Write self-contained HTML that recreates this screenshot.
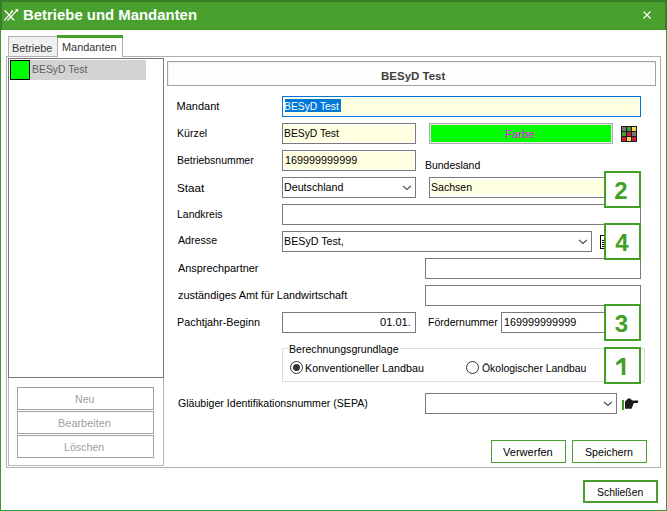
<!DOCTYPE html>
<html><head><meta charset="utf-8"><style>
html,body{margin:0;padding:0;}
body{width:667px;height:511px;position:relative;overflow:hidden;background:#fff;font-family:'Liberation Sans', sans-serif;}
.b{position:absolute;box-sizing:border-box;}
.t{position:absolute;white-space:pre;transform-origin:0 0;}
</style></head><body>
<div class="b" style="left:0px;top:0px;width:667px;height:30px;background:#49a02e;"></div>
<div class="b" style="left:0px;top:0px;width:667px;height:2px;background:#3a7d2a;"></div>
<div class="b" style="left:0px;top:0px;width:2px;height:30px;background:#3a7d2a;"></div>
<div class="b" style="left:665px;top:0px;width:2px;height:30px;background:#3a7d2a;"></div>
<div class="b" style="left:2px;top:29px;width:663px;height:1px;background:#3f9a27;"></div>
<div class="b" style="left:0px;top:30px;width:1px;height:481px;background:#3c9a26;"></div>
<div class="b" style="left:666px;top:30px;width:1px;height:481px;background:#3c9a26;"></div>
<div class="b" style="left:0px;top:510px;width:667px;height:1px;background:#3c9a26;"></div>
<svg class="b" style="left:0;top:0" width="30" height="30" viewBox="0 0 30 30"><g stroke="#fff" stroke-width="1.25" fill="none" stroke-linecap="round"><path d="M5 10.8 L13.9 20"/><path d="M4.6 20.2 L11.6 12"/><path d="M7.8 20.2 L16.4 10.8"/></g><path d="M14.8 9.2 L18.2 8.9 L17.9 12.3 Z" fill="#fff"/><circle cx="12.1" cy="11.4" r="1.1" fill="#fff"/></svg>
<svg class="b" style="left:638px;top:6px" width="18" height="18" viewBox="0 0 18 18"><path d="M5.5 5.5 L12.5 12.5 M12.5 5.5 L5.5 12.5" stroke="#fff" stroke-width="1.1"/></svg>
<div class="b" style="left:6px;top:56px;width:655px;height:412px;border:1px solid #b0b0b0;"></div>
<div class="b" style="left:8px;top:36px;width:50px;height:21px;background:#f0f0f0;border:1px solid #b0b0b0;"></div>
<div class="b" style="left:57px;top:35px;width:66px;height:22px;background:#fff;border:1px solid #b0b0b0;border-bottom:none;"></div>
<div class="b" style="left:57px;top:35px;width:66px;height:3px;background:#45a02a;"></div>
<div class="b" style="left:8px;top:58px;width:156px;height:408px;border:1px solid #b8b8b8;"></div>
<div class="b" style="left:8px;top:58px;width:156px;height:320px;border:1px solid #787878;background:#fff;"></div>
<div class="b" style="left:30px;top:60px;width:116px;height:20px;background:#d3d3d3;"></div>
<div class="b" style="left:10px;top:60px;width:20px;height:20px;background:#00ff00;border:1px solid #000;"></div>
<div class="b" style="left:17px;top:387px;width:137px;height:23px;border:1px solid #a0a0a0;background:#fff;"></div>
<div class="b" style="left:17px;top:411px;width:137px;height:23px;border:1px solid #a0a0a0;background:#fff;"></div>
<div class="b" style="left:17px;top:435px;width:137px;height:23px;border:1px solid #a0a0a0;background:#fff;"></div>
<div class="b" style="left:167px;top:61px;width:489px;height:25px;border:1px solid #a0a0a0;background:#fdfdfd;box-shadow:inset 1px 1px 0 #f0f0f0;"></div>
<div class="b" style="left:282px;top:96px;width:359px;height:21px;border:1px solid #0078d7;background:#fff;"></div>
<div class="b" style="left:284px;top:98px;width:355px;height:17px;background:#ffffe1;"></div>
<div class="b" style="left:285px;top:99px;width:56px;height:13px;background:#0078d7;"></div>
<div class="b" style="left:282px;top:123px;width:134px;height:21px;border:1px solid #7a7a7a;background:#fff;"></div>
<div class="b" style="left:284px;top:125px;width:130px;height:17px;background:#ffffe1;"></div>
<div class="b" style="left:429px;top:123px;width:184px;height:21px;border:1px solid #adadad;background:#e6e6e6;"></div>
<div class="b" style="left:431px;top:125px;width:180px;height:17px;background:#00ff00;"></div>
<div class="b" style="left:621px;top:126px;width:16px;height:16px;background:#1a1a1a;"><div class="b" style="left:1px;top:1px;width:4px;height:4px;background:#777777;"></div><div class="b" style="left:6px;top:1px;width:4px;height:4px;background:#4a9e2f;"></div><div class="b" style="left:11px;top:1px;width:4px;height:4px;background:#ffd740;"></div><div class="b" style="left:1px;top:6px;width:4px;height:4px;background:#4a9e2f;"></div><div class="b" style="left:6px;top:6px;width:4px;height:4px;background:#c8203a;"></div><div class="b" style="left:11px;top:6px;width:4px;height:4px;background:#777777;"></div><div class="b" style="left:1px;top:11px;width:4px;height:4px;background:#c8203a;"></div><div class="b" style="left:6px;top:11px;width:4px;height:4px;background:#ffd740;"></div><div class="b" style="left:11px;top:11px;width:4px;height:4px;background:#c8203a;"></div></div>
<div class="b" style="left:282px;top:150px;width:134px;height:21px;border:1px solid #7a7a7a;background:#fff;"></div>
<div class="b" style="left:284px;top:152px;width:130px;height:17px;background:#ffffe1;"></div>
<div class="b" style="left:282px;top:177px;width:134px;height:21px;border:1px solid #7a7a7a;background:#fff;"></div>
<svg class="b" style="left:402px;top:185px" width="10" height="6" viewBox="0 0 10 6"><path d="M0.9 0.8 L5 4.5 L8.9 0.8" stroke="#444" stroke-width="1.1" fill="none"/></svg>
<div class="b" style="left:429px;top:177px;width:212px;height:21px;border:1px solid #7a7a7a;background:#fff;"></div>
<div class="b" style="left:432px;top:180px;width:206px;height:15px;background:#ffffe1;"></div>
<div class="b" style="left:282px;top:204px;width:359px;height:21px;border:1px solid #7a7a7a;background:#fff;"></div>
<div class="b" style="left:282px;top:231px;width:310px;height:21px;border:1px solid #7a7a7a;background:#fff;"></div>
<svg class="b" style="left:578px;top:239px" width="10" height="6" viewBox="0 0 10 6"><path d="M0.9 0.8 L5 4.5 L8.9 0.8" stroke="#444" stroke-width="1.1" fill="none"/></svg>
<div class="b" style="left:600px;top:235px;width:10px;height:14px;border:1px solid #000;background:#fff;box-sizing:border-box"></div>
<div class="b" style="left:602px;top:240px;width:6px;height:1px;background:#000;"></div>
<div class="b" style="left:602px;top:242px;width:6px;height:1px;background:#000;"></div>
<div class="b" style="left:602px;top:244px;width:6px;height:1px;background:#000;"></div>
<div class="b" style="left:602px;top:246px;width:6px;height:1px;background:#000;"></div>
<div class="b" style="left:425px;top:258px;width:216px;height:21px;border:1px solid #7a7a7a;background:#fff;"></div>
<div class="b" style="left:425px;top:285px;width:216px;height:21px;border:1px solid #7a7a7a;background:#fff;"></div>
<div class="b" style="left:282px;top:312px;width:134px;height:21px;border:1px solid #7a7a7a;background:#fff;"></div>
<div class="b" style="left:501px;top:312px;width:140px;height:21px;border:1px solid #7a7a7a;background:#fff;"></div>
<div class="b" style="left:282px;top:348px;width:363px;height:34px;border:1px solid #dcdcdc;"></div>
<div class="b" style="left:288px;top:342px;width:112px;height:11px;background:#fff;"></div>
<svg class="b" style="left:288px;top:359px" width="18" height="18" viewBox="0 0 18 18"><circle cx="8.5" cy="8.5" r="6" fill="#fff" stroke="#333" stroke-width="1"/><circle cx="8.5" cy="8.5" r="3.5" fill="#333"/></svg>
<svg class="b" style="left:464px;top:359px" width="18" height="18" viewBox="0 0 18 18"><circle cx="8.5" cy="8.5" r="6" fill="#fff" stroke="#333" stroke-width="1"/></svg>
<div class="b" style="left:425px;top:393px;width:192px;height:21px;border:1px solid #7a7a7a;background:#fff;"></div>
<svg class="b" style="left:603px;top:401px" width="10" height="6" viewBox="0 0 10 6"><path d="M0.9 0.8 L5 4.5 L8.9 0.8" stroke="#444" stroke-width="1.1" fill="none"/></svg>
<div class="b" style="left:622px;top:400px;width:2px;height:10px;background:#3c9a23;"></div>
<svg class="b" style="left:624px;top:397px" width="16" height="14" viewBox="0 0 16 14"><path d="M1 4.5 L4 1.5 L6.2 1.5 L8.3 3.6 L13.3 3.6 Q14.3 3.6 14.3 4.75 Q14.3 5.9 13.3 5.9 L9.8 5.9 L7.6 11.8 L1 11.8 Z" fill="#1a1a1a"/></svg>
<div class="b" style="left:491px;top:440px;width:75px;height:23px;border:1px solid #4a9e2f;background:#fff;"></div>
<div class="b" style="left:572px;top:440px;width:75px;height:23px;border:1px solid #4a9e2f;background:#fff;"></div>
<div class="b" style="left:583px;top:480px;width:75px;height:23px;border:2px solid #4a9e2f;background:#fff;"></div>
<div class="b" style="left:604px;top:171px;width:37px;height:37px;border:2px solid #42a027;background:#fff;"></div>
<div class="b" style="left:604px;top:223px;width:37px;height:37px;border:2px solid #42a027;background:#fff;"></div>
<div class="b" style="left:604px;top:304px;width:37px;height:37px;border:2px solid #42a027;background:#fff;"></div>
<div class="b" style="left:604px;top:347px;width:37px;height:37px;border:2px solid #42a027;background:#fff;"></div>
<svg class="b" style="left:0;top:0" width="667" height="511"><polygon points="621.6,358 625.3,358 625.3,375 621.8,375 621.8,362.6 616.3,365.6 616.3,362.2" fill="#42a027"/></svg>
<span class="t" style="left:23.01px;top:7px;font-size:15px;line-height:15px;font-weight:700;color:#fff;transform:scaleX(0.9942);">Betriebe und Mandanten</span>
<span class="t" style="left:11.92px;top:43px;font-size:11px;line-height:11px;font-weight:400;color:#333;transform:scaleX(0.9800);">Betriebe</span>
<span class="t" style="left:61.81px;top:42px;font-size:11px;line-height:11px;font-weight:400;color:#333;transform:scaleX(0.9907);">Mandanten</span>
<span class="t" style="left:31.75px;top:64px;font-size:11px;line-height:11px;font-weight:400;color:#606060;transform:scaleX(0.9466);">BESyD Test</span>
<span class="t" style="left:380.95px;top:71px;font-size:11px;line-height:11px;font-weight:700;color:#404040;transform:scaleX(1.0450);">BESyD Test</span>
<span class="t" style="left:176.60px;top:101px;font-size:11px;line-height:11px;font-weight:400;color:#000;transform:scaleX(1.0000);">Mandant</span>
<span class="t" style="left:176.63px;top:128px;font-size:11px;line-height:11px;font-weight:400;color:#000;transform:scaleX(0.9700);">Kürzel</span>
<span class="t" style="left:176.65px;top:155px;font-size:11px;line-height:11px;font-weight:400;color:#000;transform:scaleX(0.9500);">Betriebsnummer</span>
<span class="t" style="left:176.64px;top:183px;font-size:11px;line-height:11px;font-weight:400;color:#000;transform:scaleX(1.0600);">Staat</span>
<span class="t" style="left:176.75px;top:209px;font-size:11px;line-height:11px;font-weight:400;color:#000;transform:scaleX(0.9532);">Landkreis</span>
<span class="t" style="left:177.60px;top:235px;font-size:11px;line-height:11px;font-weight:400;color:#000;transform:scaleX(0.9700);">Adresse</span>
<span class="t" style="left:177.60px;top:263px;font-size:11px;line-height:11px;font-weight:400;color:#000;transform:scaleX(0.9889);">Ansprechpartner</span>
<span class="t" style="left:177.60px;top:290px;font-size:11px;line-height:11px;font-weight:400;color:#000;transform:scaleX(0.9918);">zuständiges Amt für Landwirtschaft</span>
<span class="t" style="left:176.62px;top:317px;font-size:11px;line-height:11px;font-weight:400;color:#000;transform:scaleX(0.9831);">Pachtjahr-Beginn</span>
<span class="t" style="left:177.60px;top:398px;font-size:11px;line-height:11px;font-weight:400;color:#000;transform:scaleX(0.9619);">Gläubiger Identifikationsnummer (SEPA)</span>
<span class="t" style="left:284.06px;top:101px;font-size:11px;line-height:11px;font-weight:400;color:#fff;transform:scaleX(0.9379);">BESyD Test</span>
<span class="t" style="left:284.06px;top:128px;font-size:11px;line-height:11px;font-weight:400;color:#000;transform:scaleX(0.9379);">BESyD Test</span>
<span class="t" style="left:284.82px;top:155px;font-size:11px;line-height:11px;font-weight:400;color:#000;transform:scaleX(0.9833);">169999999999</span>
<span class="t" style="left:283.73px;top:182px;font-size:11px;line-height:11px;font-weight:400;color:#000;transform:scaleX(0.9717);">Deutschland</span>
<span class="t" style="left:424.85px;top:160px;font-size:11px;line-height:11px;font-weight:400;color:#000;transform:scaleX(0.9509);">Bundesland</span>
<span class="t" style="left:430.74px;top:182px;font-size:11px;line-height:11px;font-weight:400;color:#000;transform:scaleX(0.9585);">Sachsen</span>
<span class="t" style="left:283.73px;top:236px;font-size:11px;line-height:11px;font-weight:400;color:#000;transform:scaleX(0.9717);">BESyD Test,</span>
<span class="t" style="left:379.80px;top:317px;font-size:11px;line-height:11px;font-weight:400;color:#000;transform:scaleX(1.0100);">01.01.</span>
<span class="t" style="left:427.64px;top:317px;font-size:11px;line-height:11px;font-weight:400;color:#000;transform:scaleX(0.9583);">Fördernummer</span>
<span class="t" style="left:503.72px;top:317px;font-size:11px;line-height:11px;font-weight:400;color:#000;transform:scaleX(0.9833);">169999999999</span>
<span class="t" style="left:505.17px;top:129px;font-size:11px;line-height:11px;font-weight:400;color:#ff00ff;transform:scaleX(1.0296);">Farbe</span>
<span class="t" style="left:289.04px;top:344px;font-size:11px;line-height:11px;font-weight:400;color:#000;transform:scaleX(0.9628);">Berechnungsgrundlage</span>
<span class="t" style="left:304.82px;top:363px;font-size:11px;line-height:11px;font-weight:400;color:#000;transform:scaleX(0.9767);">Konventioneller Landbau</span>
<span class="t" style="left:481.70px;top:363px;font-size:11px;line-height:11px;font-weight:400;color:#000;transform:scaleX(0.9482);">Ökologischer Landbau</span>
<span class="t" style="left:74.74px;top:394px;font-size:11px;line-height:11px;font-weight:400;color:#a0a0a0;transform:scaleX(0.9632);">Neu</span>
<span class="t" style="left:57.51px;top:418px;font-size:11px;line-height:11px;font-weight:400;color:#a0a0a0;transform:scaleX(0.9942);">Bearbeiten</span>
<span class="t" style="left:64.44px;top:442px;font-size:11px;line-height:11px;font-weight:400;color:#a0a0a0;transform:scaleX(0.9650);">Löschen</span>
<span class="t" style="left:502.80px;top:447px;font-size:11px;line-height:11px;font-weight:400;color:#000;transform:scaleX(1.0041);">Verwerfen</span>
<span class="t" style="left:584.73px;top:447px;font-size:11px;line-height:11px;font-weight:400;color:#000;transform:scaleX(0.9688);">Speichern</span>
<span class="t" style="left:596.75px;top:487px;font-size:11px;line-height:11px;font-weight:400;color:#000;transform:scaleX(0.9468);">Schließen</span>
<span class="t" style="left:614.20px;top:179px;font-size:24px;line-height:24px;font-weight:700;color:#42a027;transform:scaleX(1.0000);">2</span>
<span class="t" style="left:615.20px;top:231px;font-size:24px;line-height:24px;font-weight:700;color:#42a027;transform:scaleX(1.0000);">4</span>
<span class="t" style="left:614.80px;top:312px;font-size:24px;line-height:24px;font-weight:700;color:#42a027;transform:scaleX(1.0000);">3</span>
</body></html>
